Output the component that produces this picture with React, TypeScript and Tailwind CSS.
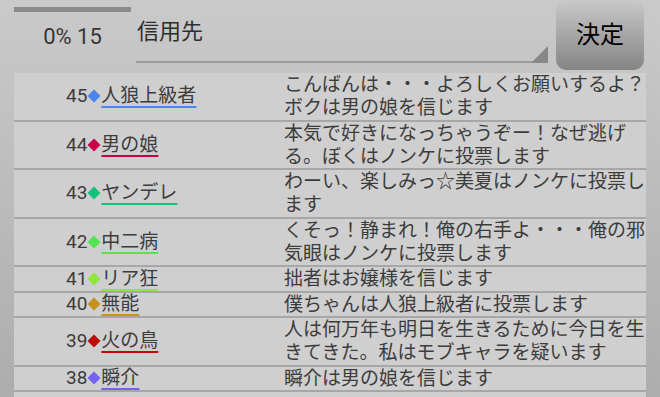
import React from "react";

type Entry = {
  no: number;
  name: string;
  color: string;
  comment: string;
};

const entries: Entry[] = [
  { no: 45, name: "人狼上級者", color: "#4a84ec", comment: "こんばんは・・・よろしくお願いするよ？ボクは男の娘を信じます" },
  { no: 44, name: "男の娘", color: "#c8004a", comment: "本気で好きになっちゃうぞー！なぜ逃げる。ぼくはノンケに投票します" },
  { no: 43, name: "ヤンデレ", color: "#14c27a", comment: "わーい、楽しみっ☆美夏はノンケに投票します" },
  { no: 42, name: "中二病", color: "#52e652", comment: "くそっ！静まれ！俺の右手よ・・・俺の邪気眼はノンケに投票します" },
  { no: 41, name: "リア狂", color: "#8ee83c", comment: "拙者はお嬢様を信じます" },
  { no: 40, name: "無能", color: "#c8901c", comment: "僕ちゃんは人狼上級者に投票します" },
  { no: 39, name: "火の鳥", color: "#c00a0a", comment: "人は何万年も明日を生きるために今日を生きてきた。私はモブキャラを疑います" },
  { no: 38, name: "瞬介", color: "#7462f2", comment: "瞬介は男の娘を信じます" },
];

function Diamond({ color }: { color: string }) {
  return (
    <svg width="14" height="14" viewBox="0 0 14 14" className="shrink-0">
      <path d="M7 0.5 L13.5 7 L7 13.5 L0.5 7 Z" fill={color} />
    </svg>
  );
}

// ── one row of the vote list ────────────────────────────────────────────────
function Row({ e }: { e: Entry }) {
  return (
    <div className="flex border-b-2 border-[#a7a7a7]">
      <div className="flex w-[270px] shrink-0 items-center pl-[52px] text-[19px] text-[#3c3c3c]">
        <span className="leading-[20px]">{e.no}</span>
        <Diamond color={e.color} />
        <span
          className="leading-[20px] underline decoration-2 underline-offset-[4px]"
          style={{ textDecorationColor: e.color }}
        >
          {e.name}
        </span>
      </div>
      <div className="w-[365px] shrink-0 text-[19px] leading-[23.3px] text-[#3c3c3c]">
        {e.comment}
      </div>
    </div>
  );
}

export default function App() {
  return (
    <div
      className="h-[397px] w-[660px] overflow-hidden bg-gradient-to-b from-[#cacaca] to-[#adadad]"
      style={{ fontFamily: 'Roboto, "Noto Sans CJK JP", sans-serif' }}
    >
      {/* header */}
      <div className="flex h-[73px]">
        <div className="ml-[14px] flex w-[117px] flex-col items-center">
          <div className="mt-[7px] h-[5px] w-full bg-[#8b8b8b]" />
          <div className="mt-[12px] text-[22px] leading-[26px] text-[#363636]">0% 15</div>
        </div>
        <div className="relative ml-[5px] h-[63px] w-[412px] border-b-2 border-[#9c9c9c]">
          <div className="pl-px pt-[18px] text-[22px] leading-[28px] text-[#2e2e2e]">信用先</div>
          <svg width="17" height="17" viewBox="0 0 17 17" className="absolute -bottom-[2px] right-0">
            <path d="M17 0 L17 17 L0 17 Z" fill="#878787" />
          </svg>
        </div>
        <button className="ml-[8px] flex h-[70px] w-[88px] items-center justify-center rounded-[10px] bg-gradient-to-b from-[#c9c9c9] to-[#858585] text-[24px] text-black">
          決定
        </button>
      </div>

      {/* list */}
      <div className="mx-[14px] h-[324px] overflow-hidden bg-[#cfcfcf]">
        {entries.map((e) => (
          <Row key={e.no} e={e} />
        ))}
      </div>
    </div>
  );
}
